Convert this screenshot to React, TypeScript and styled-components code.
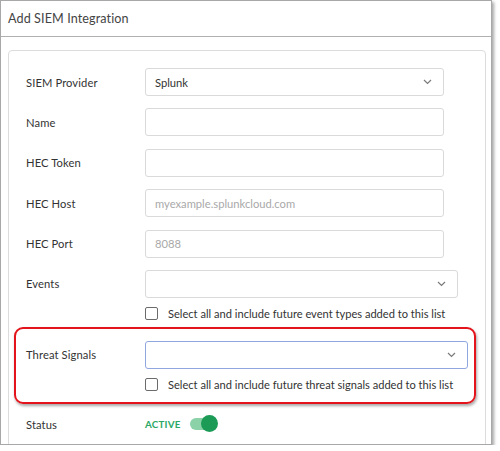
import React from "react";
import styled, { createGlobalStyle } from "styled-components";

const Global = createGlobalStyle`
  html, body { margin: 0; padding: 0; background: #fff; }
  body { font-family: Lato, "Noto Sans", sans-serif; color: #333; }
  * { box-sizing: border-box; }
`;

const Frame = styled.div`
  width: 492px;
  height: 445px;
  border: 1px solid #a8a8a8;
  box-shadow: 2px 2px 3px rgba(0, 0, 0, 0.35);
  overflow: hidden;
  background: #fff;
`;

const Header = styled.div`
  height: 36px;
  border-bottom: 1px solid #b0b0b0;
  display: flex;
  align-items: center;
  padding-left: 7px;
  font-size: 12.6px;
  color: #444;
  letter-spacing: 0.1px;
`;

const Card = styled.div`
  margin: 13px 5px 0 7px;
  border: 1px solid #dcdcdc;
  border-radius: 4px;
  padding: 17px 17px 40px 17px;
`;

const Row = styled.div<{ $mb?: number; $mt?: number }>`
  display: grid;
  grid-template-columns: 119px 1fr;
  align-items: center;
  margin-top: ${(p) => p.$mt ?? 0}px;
  margin-bottom: ${(p) => (p.$mb ?? 12.4)}px;
`;

const Label = styled.div`
  font-size: 11.2px;
  color: #333;
  letter-spacing: 0.1px;
`;

const Field = styled.div<{ $right?: number; $focus?: boolean }>`
  height: 28px;
  margin-right: ${(p) => p.$right ?? 0}px;
  border: 1px solid ${(p) => (p.$focus ? "#8fa6df" : "#dadada")};
  border-radius: 3px;
  display: flex;
  align-items: center;
  justify-content: space-between;
  padding: 0 11px 0 9px;
  font-size: 11.2px;
  color: #333;
`;

const Placeholder = styled.span`
  color: #a9a9a9;
`;

const CheckRow = styled.label`
  grid-column: 2;
  display: flex;
  align-items: center;
  gap: 10px;
  font-size: 11.1px;
  color: #333;
  white-space: nowrap;
`;

const Box = styled.span`
  flex: none;
  width: 13px;
  height: 13px;
  border: 1.5px solid #6b6b6b;
  border-radius: 2px;
`;

const Highlight = styled.div`
  margin: 7px -8px 0 -12px;
  padding: 12px 6px 11px 10px;
  border: 2px solid #e3141b;
  border-radius: 9px;
  box-shadow: 1px 2px 3px rgba(0, 0, 0, 0.35);
`;

const StatusWrap = styled.div`
  display: flex;
  align-items: center;
  gap: 9px;
`;

const Active = styled.span`
  font-size: 9.8px;
  font-weight: 700;
  color: #2aa865;
  letter-spacing: 0.2px;
`;

const Track = styled.span`
  position: relative;
  width: 27px;
  height: 12px;
  border-radius: 6px;
  background: #8bd2a8;
`;

const Knob = styled.span`
  position: absolute;
  right: -1px;
  top: -3px;
  width: 17px;
  height: 17px;
  border-radius: 50%;
  background: #1c9b56;
`;

const Chevron = () => (
  <svg width="9" height="6" viewBox="0 0 9 6" fill="none">
    <path d="M1 1l3.5 3.5L8 1" stroke="#7a7a7a" strokeWidth="1.2" />
  </svg>
);

export default function App() {
  return (
    <>
      <Global />
      <Frame>
        <Header>Add SIEM Integration</Header>
        <Card>
          <Row>
            <Label>SIEM Provider</Label>
            <Field $right={24}>
              Splunk
              <Chevron />
            </Field>
          </Row>
          <Row>
            <Label>Name</Label>
            <Field $right={24} />
          </Row>
          <Row>
            <Label>HEC Token</Label>
            <Field $right={24} />
          </Row>
          <Row>
            <Label>HEC Host</Label>
            <Field $right={24}>
              <Placeholder>myexample.splunkcloud.com</Placeholder>
            </Field>
          </Row>
          <Row>
            <Label>HEC Port</Label>
            <Field $right={24}>
              <Placeholder>8088</Placeholder>
            </Field>
          </Row>
          <Row $mb={9}>
            <Label>Events</Label>
            <Field $right={10}>
              <span />
              <Chevron />
            </Field>
          </Row>
          <Row $mb={0}>
            <CheckRow>
              <Box />
              Select all and include future event types added to this list
            </CheckRow>
          </Row>
          <Highlight>
            <Row $mb={9}>
              <Label>Threat Signals</Label>
              <Field $focus>
                <span />
                <Chevron />
              </Field>
            </Row>
            <Row $mb={0}>
              <CheckRow>
                <Box />
                Select all and include future threat signals added to this list
              </CheckRow>
            </Row>
          </Highlight>
          <Row $mt={14}>
            <Label>Status</Label>
            <StatusWrap>
              <Active>ACTIVE</Active>
              <Track>
                <Knob />
              </Track>
            </StatusWrap>
          </Row>
        </Card>
      </Frame>
    </>
  );
}
